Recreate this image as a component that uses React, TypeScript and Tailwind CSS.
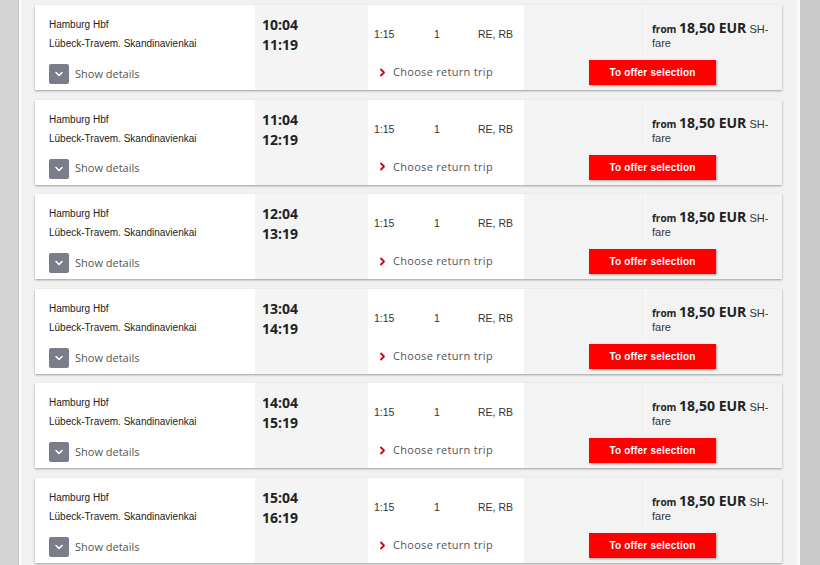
import React from "react";

const trips = [
  { dep: "10:04", arr: "11:19" },
  { dep: "11:04", arr: "12:19" },
  { dep: "12:04", arr: "13:19" },
  { dep: "13:04", arr: "14:19" },
  { dep: "14:04", arr: "15:19" },
  { dep: "15:04", arr: "16:19" },
];

const sans = "font-['Liberation_Sans',Arial,sans-serif]";
const soft = "font-['Open_Sans',sans-serif]";

function ChevronDown() {
  return (
    <svg width="10" height="10" viewBox="0 0 10 10" fill="none">
      <path d="M2 3.5 L5 6.5 L8 3.5" stroke="white" strokeWidth="1.6" strokeLinecap="round" strokeLinejoin="round" />
    </svg>
  );
}

function ChevronRight() {
  return (
    <svg width="7" height="9" viewBox="0 0 7 9" fill="none">
      <path d="M2 1.5 L5 4.5 L2 7.5" stroke="#d0021b" strokeWidth="1.8" strokeLinecap="round" strokeLinejoin="round" />
    </svg>
  );
}

function TripCard({ dep, arr }: { dep: string; arr: string }) {
  return (
    <div className="flex h-[85px] shrink-0 shadow-[0_1px_2px_rgba(0,0,0,0.35)]">
      <div className="w-[220px] bg-white pl-[14px] pt-[13px] flex flex-col">
        <div className={`${sans} text-[10px] leading-[14px] text-[#222]`}>Hamburg Hbf</div>
        <div className={`${sans} text-[10px] leading-[14px] text-[#222] mt-[5px]`}>Lübeck-Travem. Skandinavienkai</div>
        <div className="flex items-center mt-[13px]">
          <div className="w-[20px] h-[20px] bg-[#7b7e8a] rounded-[2px] flex items-center justify-center">
            <ChevronDown />
          </div>
          <span className={`${soft} text-[11px] text-[#555] ml-[6px]`}>Show details</span>
        </div>
      </div>
      <div className={`w-[113px] bg-[#f4f4f4] pl-[7px] pt-[10px] ${soft} font-bold text-[14px] leading-[20px] text-[#222]`}>
        <div>{dep}</div>
        <div>{arr}</div>
      </div>
      <div className="w-[156px] bg-white flex flex-col">
        <div className={`flex pt-[22px] pl-[6px] ${sans} text-[10.5px] leading-[14px] text-[#333]`}>
          <span className="w-[60px]">1:15</span>
          <span className="w-[44px]">1</span>
          <span>RE, RB</span>
        </div>
        <div className="flex items-center mt-[23px] pl-[11px]">
          <ChevronRight />
          <span className={`${soft} text-[11px] text-[#555] ml-[7px] tracking-[0.3px]`}>Choose return trip</span>
        </div>
      </div>
      <div className="flex-1 bg-[#f3f3f3] flex flex-col">
        <div className="flex h-[49px]">
          <div className="w-[121px]" />
          <div className="flex-1 border-l border-[#fbfbfb] pl-[6px] pt-[16px] text-[#222]">
            <div className={`${sans} text-[11px] leading-[14px] whitespace-nowrap`}>
              <span className={`${soft} font-bold text-[10px]`}>from </span>
              <span className={`${soft} font-bold text-[14px]`}>18,50 EUR</span>
              <span className="text-[#333]"> SH-</span>
            </div>
            <div className={`${sans} text-[11px] leading-[14px] text-[#333]`}>fare</div>
          </div>
        </div>
        <div className="pl-[65px] mt-[4px]">
          <button className={`w-[127px] h-[25px] bg-[#ff0000] text-white ${sans} font-bold text-[10px] tracking-[0.2px] shadow-[1px_1px_2px_rgba(0,0,0,0.35)]`}>
            To offer selection
          </button>
        </div>
      </div>
    </div>
  );
}

export default function App() {
  return (
    <div className="flex h-[565px] w-[820px] overflow-hidden bg-[#d2d2d2]">
      <div className="w-[19px] bg-[#d4d4d4] border-r border-[#c4c4c4]" />
      <div className="w-[778px] bg-[#f1f1f1] border-l-2 border-white flex flex-col gap-[9.6px] pt-[5px] pl-[14px] pr-[15px]">
        {trips.map((t) => (
          <TripCard key={t.dep} dep={t.dep} arr={t.arr} />
        ))}
      </div>
      <div className="w-[3px] bg-[#fafafa]" />
      <div className="flex-1 bg-[#c9c9c9]" />
    </div>
  );
}
